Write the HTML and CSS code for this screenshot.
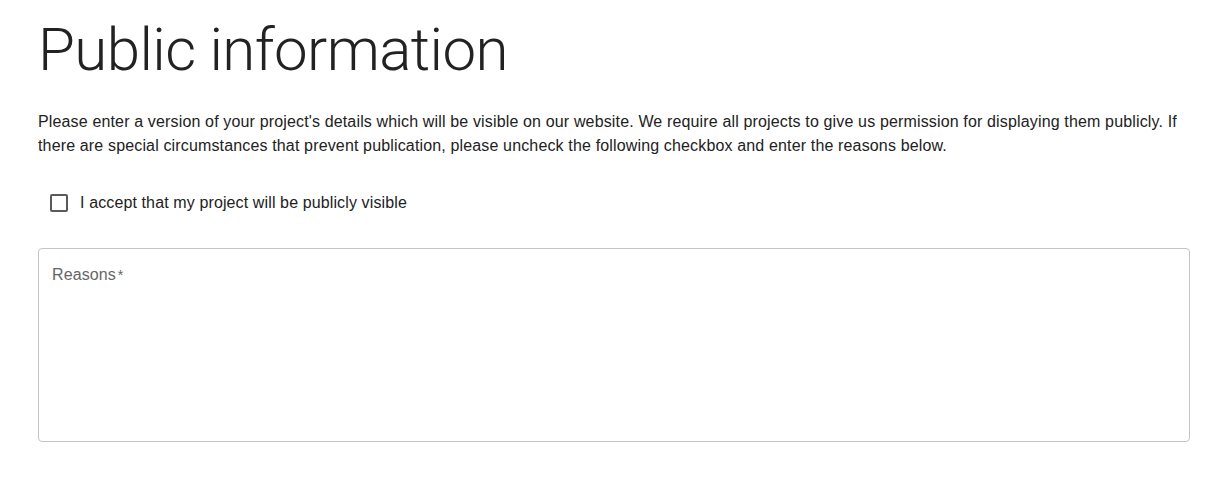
FILE: index.html
```html
<!DOCTYPE html>
<html lang="en">
<head>
<meta charset="utf-8">
<title>Public information</title>
<link rel="stylesheet" href="styles.css">
</head>
<body>
<main class="section">
  <h1 class="section-title">Public information</h1>
  <p class="section-intro">Please enter a version of your project's details which will be visible on our website. We require all projects to give us permission for displaying them publicly. If there are special circumstances that prevent publication, please uncheck the following checkbox and enter the reasons below.</p>
  <label class="check">
    <span class="check-box"></span>
    <span class="check-label">I accept that my project will be publicly visible</span>
  </label>
  <div class="field">
    <span class="field-label">Reasons<span class="req">*</span></span>
  </div>
</main>
</body>
</html>
```

FILE: styles.css
```css
html, body {
  margin: 0;
  padding: 0;
  background: #fff;
}

body {
  font-family: "Liberation Sans", Arial, sans-serif;
  color: #222;
}

.section {
  padding: 14px 38px 0 38px;
  width: 1152px;
}

.section-title {
  margin: 0;
  font-family: "Roboto", "Liberation Sans", sans-serif;
  font-weight: 300;
  font-size: 60px;
  letter-spacing: -0.6px;
  line-height: 72px;
  color: #222;
}

.section-intro {
  margin: 24px 0 0 0;
  font-size: 16px;
  letter-spacing: 0.15px;
  line-height: 24px;
  color: #222;
}

.check {
  display: flex;
  align-items: center;
  gap: 12px;
  margin: 33px 0 0 12px;
  height: 24px;
}

.check-box {
  width: 14px;
  height: 14px;
  border: 2px solid #5a5a5a;
  border-radius: 2px;
}

.check-label {
  font-size: 16px;
  letter-spacing: 0.12px;
  color: #222;
}

.field {
  margin-top: 33px;
  border: 1px solid #c4c4c4;
  border-radius: 4px;
  padding: 17px 13px;
  box-sizing: border-box;
  height: 194px;
}

.field-label {
  font-size: 16px;
  letter-spacing: 0.1px;
  color: #666;
}

.req {
  margin-left: 2px;
  font-size: 14px;
}
```
